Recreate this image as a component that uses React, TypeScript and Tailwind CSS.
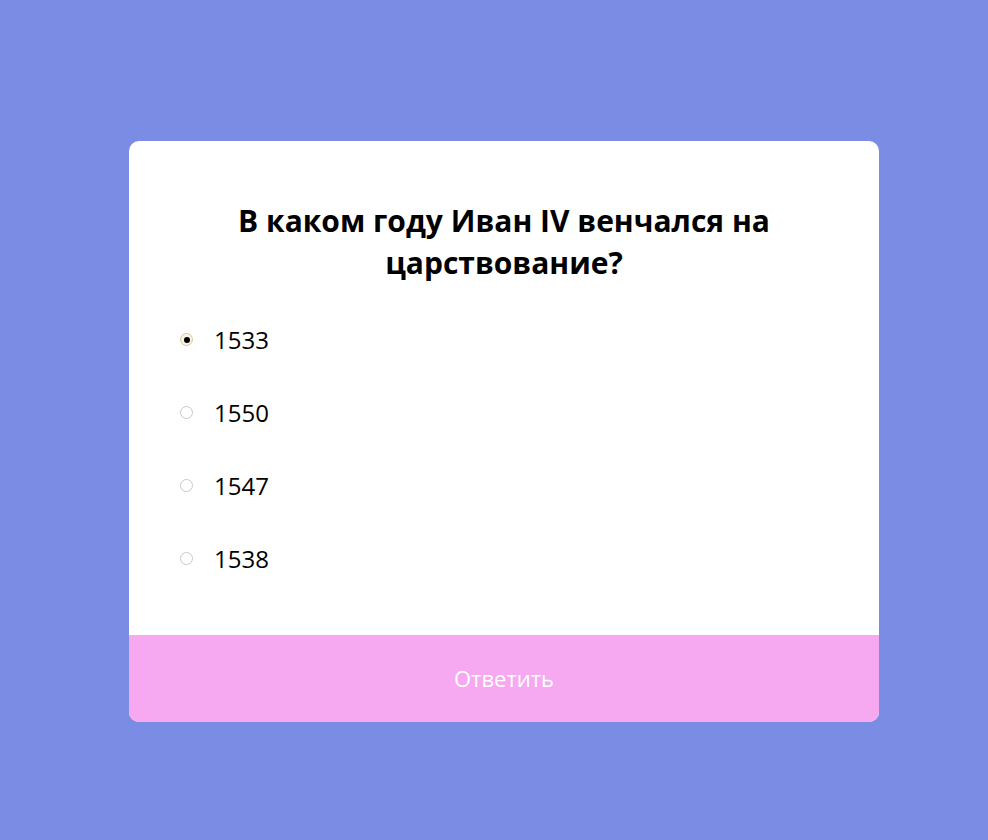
const options = ['1533', '1550', '1547', '1538']

const Radio: React.FC<{ checked?: boolean }> = ({ checked }) => {
  if (checked) {
    return (
      <span className="flex items-center justify-center w-[13px] h-[13px] rounded-full border border-[#dcc59a] bg-[#fbf3e2] shrink-0">
        <span className="w-[6px] h-[6px] rounded-full bg-black" />
      </span>
    )
  }
  return (
    <span className="w-[13px] h-[13px] rounded-full border border-[#c9c9c9] bg-white shrink-0" />
  )
}

export default function App() {
  return (
    <div
      className="w-full h-[840px] bg-[#7b8ce5] pt-[141px] pl-[129px]"
      style={{ fontFamily: '"Open Sans", "Noto Sans", sans-serif' }}
    >
      <div className="w-[750px] bg-white rounded-[10px] overflow-hidden">
        <div className="pt-[59px] pb-[40px] px-[51px]">
          <h2 className="text-center text-[30px] leading-[42px] font-bold text-black px-[30px]">
            В каком году Иван IV венчался на царствование?
          </h2>
          <ul className="mt-[19px] flex flex-col">
            {options.map((option, i) => (
              <li key={option} className="h-[73px] flex items-center gap-[21px]">
                <Radio checked={i === 0} />
                <span className="text-[24px] text-black">{option}</span>
              </li>
            ))}
          </ul>
        </div>
        <button className="w-full h-[87px] bg-[#f6a8f0] text-white text-[22px]">
          Ответить
        </button>
      </div>
    </div>
  )
}
